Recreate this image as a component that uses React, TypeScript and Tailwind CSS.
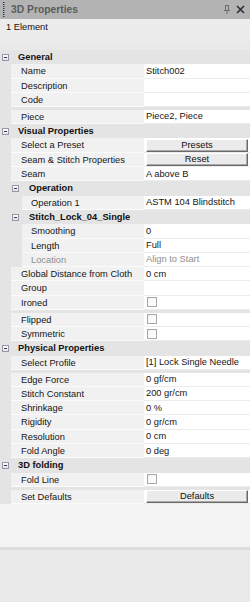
import React from "react";

type Row =
  | { t: "h"; level: 0 | 1; label: string }
  | { t: "sep" }
  | {
      t: "p";
      level?: 0 | 1;
      label: string;
      value?: string;
      kind?: "text" | "button" | "check";
      disabled?: boolean;
    };

const rows: Row[] = [
  { t: "h", level: 0, label: "General" },
  { t: "p", label: "Name", value: "Stitch002" },
  { t: "p", label: "Description", value: "" },
  { t: "p", label: "Code", value: "" },
  { t: "sep" },
  { t: "p", label: "Piece", value: "Piece2, Piece" },
  { t: "h", level: 0, label: "Visual Properties" },
  { t: "p", label: "Select a Preset", value: "Presets", kind: "button" },
  { t: "p", label: "Seam & Stitch Properties", value: "Reset", kind: "button" },
  { t: "p", label: "Seam", value: "A above B" },
  { t: "h", level: 1, label: "Operation" },
  { t: "p", level: 1, label: "Operation 1", value: "ASTM 104 Blindstitch" },
  { t: "h", level: 1, label: "Stitch_Lock_04_Single" },
  { t: "p", level: 1, label: "Smoothing", value: "0" },
  { t: "p", level: 1, label: "Length", value: "Full" },
  { t: "p", level: 1, label: "Location", value: "Align to Start", disabled: true },
  { t: "p", label: "Global Distance from Cloth", value: "0 cm" },
  { t: "p", label: "Group", value: "" },
  { t: "p", label: "Ironed", kind: "check" },
  { t: "sep" },
  { t: "p", label: "Flipped", kind: "check" },
  { t: "p", label: "Symmetric", kind: "check" },
  { t: "h", level: 0, label: "Physical Properties" },
  { t: "p", label: "Select Profile", value: "[1] Lock Single Needle" },
  { t: "sep" },
  { t: "p", label: "Edge Force", value: "0 gf/cm" },
  { t: "p", label: "Stitch Constant", value: "200 gr/cm" },
  { t: "p", label: "Shrinkage", value: "0 %" },
  { t: "p", label: "Rigidity", value: "0 gr/cm" },
  { t: "p", label: "Resolution", value: "0 cm" },
  { t: "p", label: "Fold Angle", value: "0 deg" },
  { t: "h", level: 0, label: "3D folding" },
  { t: "p", label: "Fold Line", kind: "check" },
  { t: "sep" },
  { t: "p", label: "Set Defaults", value: "Defaults", kind: "button" },
];

function Minus() {
  return (
    <div className="w-[7px] h-[7px] border border-[#9696a6] bg-gradient-to-b from-[#ffffff] to-[#e2e2e8] flex items-center justify-center shrink-0">
      <div className="w-[3px] h-[1px] bg-[#3c3c5a]" />
    </div>
  );
}

function GridRow({ r }: { r: Row }) {
  if (r.t === "sep") {
    return <div className="h-[2.7px] bg-[#e4e4e4]" />;
  }
  if (r.t === "h") {
    return (
      <div className="h-[14.3px] leading-[14.3px] bg-[#e4e4e4] flex items-center font-bold text-[#111111]">
        <div className={r.level === 0 ? "ml-[2px]" : "ml-[12px]"}>
          <Minus />
        </div>
        <span className={r.level === 0 ? "ml-[9px]" : "ml-[10px]"}>{r.label}</span>
      </div>
    );
  }
  const lvl = r.level ?? 0;
  const txt = r.disabled ? "text-[#8f8f8f]" : "text-[#151515]";
  return (
    <div className="h-[14.3px] leading-[14.3px] flex">
      <div className={(lvl === 0 ? "w-[11px]" : "w-[22px]") + " shrink-0 bg-[#e4e4e4]"} />
      <div
        className={
          (lvl === 0 ? "w-[133px] pl-[10px]" : "w-[122px] pl-[9px]") +
          " shrink-0 bg-[#f1f1f1] border-b border-[#fbfbfb] whitespace-nowrap overflow-hidden " +
          txt
        }
      >
        {r.label}
      </div>
      <div className={"flex-1 bg-white border-b border-[#ececec] flex items-center whitespace-nowrap " + txt}>
        {r.kind === "button" ? (
          <div className="ml-[2px] w-[102px] h-[13px] leading-[11px] text-center bg-[#ebebeb] border-t border-l border-t-white border-l-white border-b border-r border-b-[#6a6a6a] border-r-[#6a6a6a] shadow-[inset_-1px_-1px_0_#a8a8a8] text-[#101010]">
            {r.value}
          </div>
        ) : r.kind === "check" ? (
          <div className="ml-[3px] w-[10px] h-[10px] border border-[#a6a6a6] bg-gradient-to-br from-[#f4f4f4] to-white" />
        ) : (
          <span className="pl-[2px]">{r.value}</span>
        )}
      </div>
    </div>
  );
}

export default function App() {
  return (
    <div className="w-[250px] h-[602px] flex flex-col overflow-hidden font-['Liberation_Sans',Arial,sans-serif] text-[9.3px] bg-[#eaeaea]">
      {/* title bar */}
      <div className="h-[19px] shrink-0 bg-[#b3b3b3] flex items-center">
        <svg width="2" height="15" className="ml-[3px]" viewBox="0 0 2 15">
          {[0, 2, 4, 6, 8, 10, 12, 14].map((y) => (
            <rect key={y} x="0" y={y} width="1.4" height="1" fill="#1e2c6e" />
          ))}
        </svg>
        <span className="ml-[6px] font-bold text-[10.3px] text-[#5c5c5c]">3D Properties</span>
        <div className="flex-1" />
        <svg width="6" height="9" viewBox="0 0 6 9" className="mr-[6px]">
          <rect x="1.5" y="0.5" width="3" height="5" fill="none" stroke="#6c6c6c" strokeWidth="1" />
          <line x1="0" y1="5.5" x2="6" y2="5.5" stroke="#6c6c6c" strokeWidth="1" />
          <line x1="3" y1="5.5" x2="3" y2="9" stroke="#6c6c6c" strokeWidth="1" />
        </svg>
        <svg width="9" height="9" viewBox="0 0 9 9" className="mr-[5px]">
          <path d="M1 1 L8 8 M8 1 L1 8" stroke="#2c2c3c" strokeWidth="1.6" />
        </svg>
      </div>
      {/* info */}
      <div className="h-[22px] shrink-0 bg-[#ececec]">
        <div className="h-[16px] leading-[16px] pl-[6px] text-[#111111]">1 Element</div>
      </div>
      <div className="h-[9px] shrink-0 bg-[#e9e9e9]" />
      {/* grid */}
      <div className="shrink-0 flex flex-col">
        {rows.map((r, i) => (
          <GridRow key={i} r={r} />
        ))}
      </div>
      <div className="h-[43px] shrink-0 bg-[#f3f3f3]" />
      <div className="h-[3px] shrink-0 bg-[#dcdcdc]" />
      <div className="flex-1 bg-[#eaeaea]" />
    </div>
  );
}
